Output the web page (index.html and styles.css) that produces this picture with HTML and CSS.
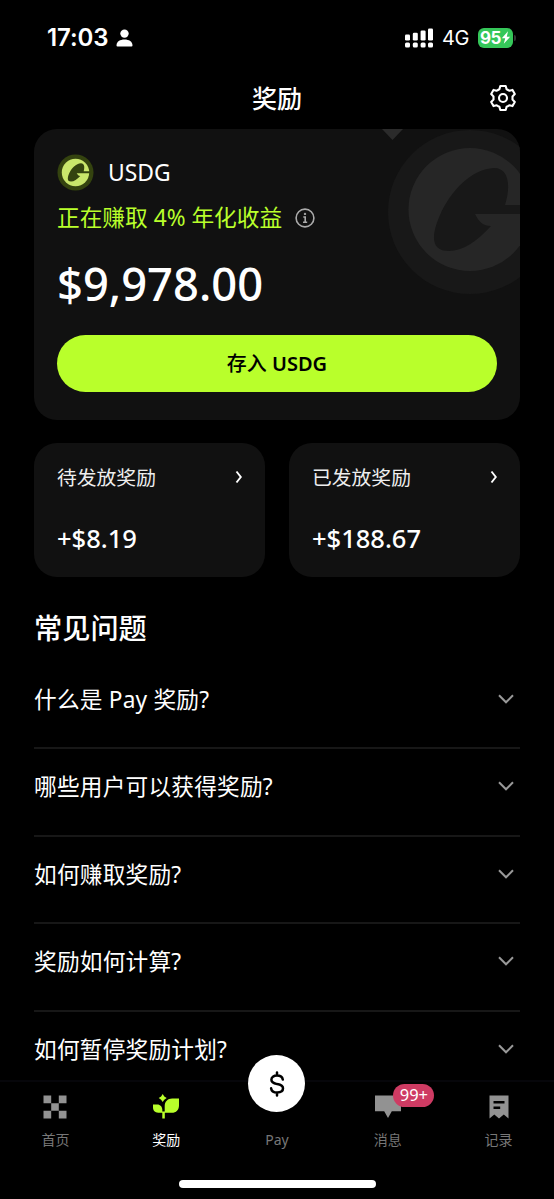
FILE: index.html
```html
<!DOCTYPE html>
<html lang="zh-CN">
<head>
<meta charset="utf-8">
<title>奖励</title>
<link rel="stylesheet" href="styles.css">
</head>
<body>
<div class="app">
  <header class="status">
    <div class="status-left"><span class="clock">17:03</span>
      <svg class="person" width="17" height="18" viewBox="0 0 17 18" fill="#fff"><circle cx="8.5" cy="4.6" r="4.2"/><path d="M.5 16.6C.5 12.600 4 10.600 8.500 10.600s8 2 8 6q0 .9-1 .9h-14q-1 0-1-.9z"/></svg>
    </div>
    <div class="status-right">
      <svg width="29" height="20" viewBox="0 0 29 20" fill="#fff"><rect x="0" y="6.500" width="5" height="6" rx="1.300"/><rect x="7.800" y="4.700" width="5" height="7.800" rx="1.300"/><rect x="15.600" y="2.500" width="5" height="10" rx="1.300"/><rect x="23" y=".5" width="5" height="12" rx="1.300"/><rect x="0" y="14.500" width="5" height="5" rx="1.500"/><rect x="7.800" y="14.500" width="5" height="5" rx="1.500"/><rect x="15.600" y="14.500" width="5" height="5" rx="1.500"/><rect x="23" y="14.500" width="5" height="5" rx="1.500"/></svg>
      <span class="network">4G</span>
      <span class="battery"><span>95</span><svg width="10" height="13" viewBox="0 0 9 13" fill="#fff"><path d="M6.500.3.3 7.300h3.400L2.300 12.700l6.400-7H5.300z"/></svg></span>
      <span class="battery-cap"></span>
    </div>
  </header>

  <div class="titlebar">
    <span></span><h1>奖励</h1>
    <svg class="gear" width="28" height="28" viewBox="0 0 28 28" fill="none" stroke="#fff" stroke-width="2.100" stroke-linejoin="round"><path d="M11.300 2h5.400l.9 3.200q1.500.6 2.700 1.600l3.200-.9 2.300 4.200-2.300 2.300v3.200l2.300 2.300-2.300 4.200-3.200-.9q-1.200 1-2.700 1.600l-.9 3.200h-5.400l-.9-3.200q-1.500-.6-2.700-1.600l-3.200.9-2.300-4.200 2.300-2.300v-3.200l-2.300-2.300 2.300-4.200 3.200.9q1.200-1 2.700-1.600z"/><circle cx="14" cy="14" r="4"/></svg>
  </div>

  <main class="content">
    <section class="balance">
      <svg class="watermark" width="160" height="170" viewBox="0 0 160 170"><path d="M22 0h21L32.500 11z" fill="#2b2b2b"/><circle cx="110" cy="83" r="82" fill="#181818"/><circle cx="110" cy="80.500" r="61.500" fill="#262626"/><path d="M160 76h-15C151 57 149 39 134 39 112 40 91 61 80 86c-10 23-8 36 9 36 14 0 27-9 42-25-8 0-12-4-16-12h45z" fill="#181818"/></svg>
      <div class="coin">
        <svg width="37" height="37" viewBox="0 0 37 37"><circle cx="18.500" cy="18.500" r="18" fill="#34430f"/><circle cx="18.500" cy="18.500" r="13.700" fill="#c9e66b"/><path d="M33 17.300h-6.300c1.200-4.200.7-8-2.700-8-4.900.2-9.600 4.900-12 10.400-1.800 4.500-1.800 7.700 2 7.700 3.200 0 6-2 9.300-5.500-1.600 0-2.700-1-3.600-2.600H33z" fill="#34430f"/></svg>
        <span>USDG</span>
      </div>
      <div class="apy"><span>正在赚取 4% 年化收益</span>
        <svg width="20" height="20" viewBox="0 0 20 20" fill="none" stroke="#aaa" stroke-width="1.600"><circle cx="10" cy="10" r="8.900"/><path d="M8.300 9h1.900v5M8 14.200h4.200"/><circle cx="10" cy="5.900" r=".4"/></svg>
      </div>
      <div class="amount">$9,978.00</div>
      <button class="deposit"><span>存入</span> USDG</button>
    </section>

    <section class="rewards">
      <div class="reward"><div class="reward-head"><span>待发放奖励</span><svg width="8" height="14" viewBox="0 0 8 14"><path d="m1.500 1.500 4.300 5.500-4.300 5.500"/></svg></div><div class="reward-value">+$8.19</div></div>
      <div class="reward"><div class="reward-head"><span>已发放奖励</span><svg width="8" height="14" viewBox="0 0 8 14"><path d="m1.500 1.500 4.300 5.500-4.300 5.500"/></svg></div><div class="reward-value">+$188.67</div></div>
    </section>

    <h2>常见问题</h2>
    <ul class="faq">
      <li><span>什么是 Pay 奖励?</span><svg width="16" height="10" viewBox="0 0 16 10"><path d="m1 1.300 7 7 7-7"/></svg></li>
      <li><span>哪些用户可以获得奖励?</span><svg width="16" height="10" viewBox="0 0 16 10"><path d="m1 1.300 7 7 7-7"/></svg></li>
      <li><span>如何赚取奖励?</span><svg width="16" height="10" viewBox="0 0 16 10"><path d="m1 1.300 7 7 7-7"/></svg></li>
      <li><span>奖励如何计算?</span><svg width="16" height="10" viewBox="0 0 16 10"><path d="m1 1.300 7 7 7-7"/></svg></li>
      <li><span>如何暂停奖励计划?</span><svg width="16" height="10" viewBox="0 0 16 10"><path d="m1 1.300 7 7 7-7"/></svg></li>
    </ul>
  </main>

  <nav class="tabs">
    <div class="tab"><svg width="26" height="26" viewBox="0 0 26 26" fill="#929292"><path d="M1.500 1.500h7.700v7.700H1.500zM16.800 1.500h7.700v7.700h-7.700zM9.200 9.200h7.600v7.600H9.200zM1.500 16.800h7.700v7.700H1.500zM16.800 16.800h7.700v7.700h-7.700z"/></svg><span>首页</span></div>
    <div class="tab active"><svg width="26" height="26" viewBox="0 0 26 26" fill="#b9ff2b"><path d="m9.700.1 1.600 2.400 2.400 1.600-2.400 1.600-1.600 2.400-1.600-2.400-2.400-1.600 2.400-1.600zM0 10.400h4.300c3 0 5 2.300 5 5.200v3.200H5.200c-3.200 0-5.200-2.100-5.200-5.200zM26 4.500v7c0 4.500-2.800 7.300-7.200 7.300h-7.100v-6.500c0-4.700 2.800-7.800 7.500-7.800zM9.300 17.500h2.500v6.900H9.300z"/></svg><span>奖励</span></div>
    <div class="tab"><div class="pay"><svg width="18" height="30" viewBox="0 0 18 30" fill="none" stroke="#000" stroke-width="2.500" stroke-linecap="round"><path d="M9 3.500v3M9 23.500v3M14.800 10.600c-.4-2.500-2.500-4-5.800-4-3.400 0-5.600 1.600-5.600 4.100 0 2.700 2.200 3.600 5.800 4.400 3.600.7 5.800 1.600 5.800 4.200 0 2.700-2.300 4.200-5.800 4.200-3.600 0-5.800-1.600-6.100-4.200"/></svg></div><span>Pay</span></div>
    <div class="tab"><svg width="26" height="26" viewBox="0 0 26 26" fill="#929292"><path d="M0 1.500h26v15.800h-9.200L13 24l-3.800-6.700H0z"/></svg><b class="badge">99+</b><span>消息</span></div>
    <div class="tab"><svg width="26" height="26" viewBox="0 0 26 26" fill="#929292"><path fill-rule="evenodd" d="M3.500 1.500h19v23l-4.700-4-4.800 4-4.700-4-4.800 4zM7.500 7v2.500h11V7zM7.500 12.500V15h6.700v-2.500z"/></svg><span>记录</span></div>
    <div class="home-bar"></div>
  </nav>
</div>
</body>
</html>
```
FILE: styles.css
```css
* { box-sizing: border-box; }
body { margin: 0; background: #000; color: #fff; font-family: "Noto Sans", "Noto Sans CJK SC", sans-serif; }
svg { display: block; flex: none; }
.app { width: 554px; height: 1199px; display: flex; flex-direction: column; overflow: hidden; background: #000; }
.status { height: 75px; padding: 0 41px 0 47px; display: flex; align-items: center; justify-content: space-between; font-family: Inter, sans-serif; }
.status-left, .status-right { display: flex; align-items: center; }
.clock { font-size: 24px; font-weight: 600; width: 69px; letter-spacing: -.1px; line-height: 30px; }
.network { font-size: 20px; margin-left: 8px; width: 29px; letter-spacing: -.4px; }
.battery { width: 35px; height: 20px; margin-left: 7px; border-radius: 6px; background: #35c759; display: flex; align-items: center; justify-content: center; font-size: 17px; font-weight: 700; letter-spacing: -.5px; }
.battery-cap { width: 2px; height: 6px; margin: 0 -3px 0 1px; border-radius: 0 2px 2px 0; background: #333; }
.titlebar { height: 54px; padding: 9px 37px 0; display: grid; grid-template-columns: 28px 1fr 28px; align-items: start; }
h1 { margin: 0; text-align: center; font-size: 25px; line-height: 28px; font-weight: 500; }
.content { flex: 1; min-height: 0; padding: 0 34px; overflow: hidden; }
.balance { position: relative; overflow: hidden; height: 291px; padding: 24px 23px 0; border-radius: 23px; background: #111; }
.watermark { position: absolute; right: 0; top: 0; }
.coin { position: relative; display: flex; align-items: center; gap: 14px; height: 38px; font-size: 22.900px; }
.apy { display: flex; align-items: center; gap: 13px; height: 32px; margin-top: 11px; color: #b9ff2b; font-size: 22.700px; line-height: 32px; }
.amount { height: 60px; margin-top: 20px; font-size: 45.300px; line-height: 60px; font-weight: 500; }
.deposit { display: block; width: 440px; height: 57px; margin-top: 21px; padding: 0; border: 0; border-radius: 29px; background: #b9ff2b; color: #000; font-family: inherit; font-size: 20px; font-weight: 600; line-height: 57px; }
.deposit span { font-weight: 500; }
.rewards { display: grid; grid-template-columns: 231px 231px; gap: 24px; margin-top: 23px; }
.reward { height: 134px; padding: 21px 22px 0 23px; border-radius: 23px; background: #111; }
.reward-head { display: flex; align-items: center; justify-content: space-between; height: 28px; font-size: 19.800px; line-height: 28px; color: #eee; }
.reward-head svg { margin-top: -2px; fill: none; stroke: #fff; stroke-width: 1.900; }
.reward-value { margin-top: 29px; font-size: 25.500px; line-height: 34px; font-weight: 500; }
h2 { margin: 31px 0 0; font-size: 28.200px; line-height: 40px; font-weight: 500; }
.faq { list-style: none; margin: 14px 0 0; padding: 0; }
.faq li { height: 87.400px; padding: 22px 6px 0 0; display: flex; justify-content: space-between; border-bottom: 2px solid #171717; font-size: 22.700px; line-height: 32px; letter-spacing: .2px; }
.faq svg { margin-top: 10px; fill: none; stroke: #999; stroke-width: 2; }
.tabs { position: relative; flex: none; height: 119px; display: grid; grid-template-columns: repeat(5, 110.800px); border-top: 2px solid #06060a; background: #000; }
.tab { position: relative; display: flex; flex-direction: column; align-items: center; gap: 10px; padding-top: 12px; font-size: 14px; line-height: 20px; color: #777; }
.tab.active { color: #fff; }
.pay { width: 57px; height: 57px; margin: -39px 0 8px; border-radius: 50%; background: #fff; display: flex; align-items: center; justify-content: center; }
.tab > span { height: 20px; }
.badge { position: absolute; left: 61px; top: 2px; width: 41px; height: 23px; border-radius: 12px; background: #ce3b63; color: #fff; text-align: center; font-size: 16.500px; font-weight: 400; line-height: 22px; }
.home-bar { position: absolute; left: 179px; top: 98px; width: 197px; height: 8px; border-radius: 4px; background: #fff; }
```
